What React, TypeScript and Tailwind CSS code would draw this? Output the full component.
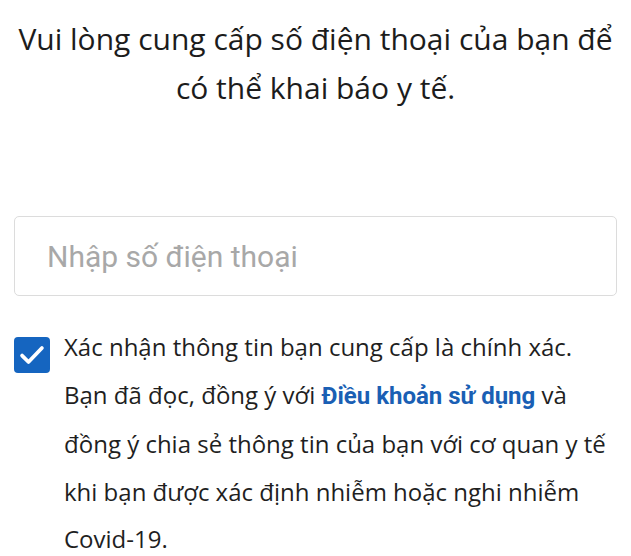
import React from 'react';

export default function App() {
  return (
    <div className="w-[631px] h-[556px] overflow-hidden bg-white text-[#1f1f1f]" style={{ fontFamily: '"Open Sans", sans-serif' }}>
      <h1 className="pt-[14px] px-[8px] text-center text-[30px] leading-[49px] font-normal text-[#1c1c1c]">
        Vui lòng cung cấp số điện thoại của bạn để có thể khai báo y tế.
      </h1>

      <div className="mt-[104px] mx-[14px] h-[80px] rounded-[5px] border border-[#dcdcdc] flex items-center px-[32px]">
        <input
          type="tel"
          placeholder="Nhập số điện thoại"
          className="w-full outline-none text-[30px] placeholder-[#a8a8a8] bg-transparent"
          style={{ fontFamily: 'Roboto, sans-serif' }}
        />
      </div>

      <div className="mt-[40px] pl-[14px] pr-[4px] flex gap-[14px]">
        <div className="shrink-0 mt-[1px] w-[36px] h-[36px] rounded-[4px] bg-[#1565c0] flex items-center justify-center">
          <svg width="28" height="28" viewBox="0 0 24 24" fill="none" stroke="white" strokeWidth="3.2" strokeLinecap="round" strokeLinejoin="round">
            <path d="M3.5 12.5l5.5 5.5L20.5 6" />
          </svg>
        </div>
        <p className="text-[24px] leading-[47.5px] text-[#1f1f1f] -mt-[13px] whitespace-nowrap">
          Xác nhận thông tin bạn cung cấp là chính xác.
          <br />
          Bạn đã đọc, đồng ý với{' '}
          <a className="font-bold text-[#1a5fb4]" style={{ fontFamily: 'Roboto, sans-serif' }}>Điều khoản sử dụng</a>{' '}
          và
          <br />
          đồng ý chia sẻ thông tin của bạn với cơ quan y tế
          <br />
          khi bạn được xác định nhiễm hoặc nghi nhiễm
          <br />
          Covid-19.
        </p>
      </div>
    </div>
  );
}
